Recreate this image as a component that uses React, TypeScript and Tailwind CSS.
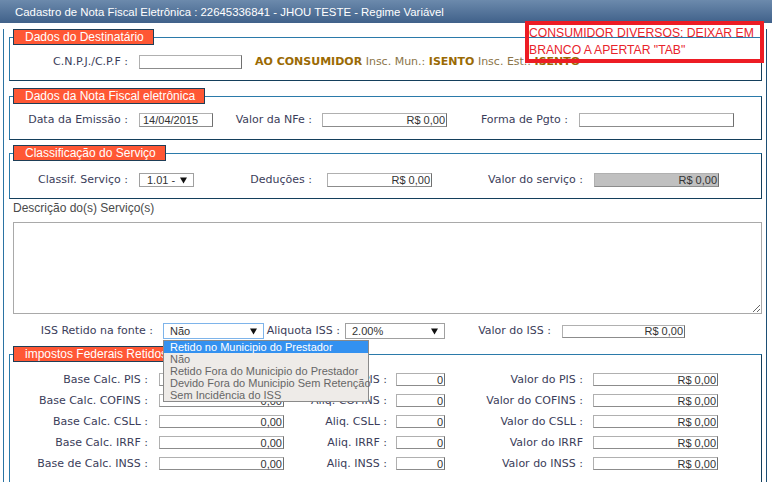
import React from 'react';

const lbl =
  "font-['DejaVu_Sans',sans-serif] text-[11px] leading-[14px] text-[#3b3d5a] whitespace-nowrap text-right";
const arial = "font-['Liberation_Sans',Arial,sans-serif]";

function Input({ className = '', value = '', left = false }: { className?: string; value?: string; left?: boolean }) {
  return (
    <div
      className={`flex items-center border border-[#b0b0b0] border-r-[#6f6f6f] border-b-[#8c8c8c] ${arial} text-[11px] leading-[12px] text-[#333] ${
        left ? 'justify-start pl-[3px]' : 'justify-end pr-[1px]'
      } ${className}`}
    >
      {value}
    </div>
  );
}

function Select({ className = '', value }: { className?: string; value: string }) {
  return (
    <div className={`flex items-center justify-between bg-white border ${arial} text-[11px] leading-[12px] text-[#333] ${className}`}>
      <span>{value}</span>
      <svg width="7" height="7" viewBox="0 0 7 7">
        <path d="M0 0.5h7L3.5 6.5z" fill="#111" />
      </svg>
    </div>
  );
}

function Box({ title, className = '', children }: { title: string; className?: string; children: React.ReactNode }) {
  return (
    <fieldset
      className={`ml-[5px] w-[753px] border border-[#2b7aaa] border-r-[#143f5c] border-b-[#143f5c] ${className}`}
    >
      <legend
        className={`ml-[3px] h-[16px] pl-[11px] pr-[9px] border border-[#1e3e57] bg-[#ff5734] text-white text-[12px] leading-[14px] whitespace-nowrap ${arial}`}
      >
        {title}
      </legend>
      {children}
    </fieldset>
  );
}

function TaxRow({ base, aliq, valor }: { base: string; aliq: string; valor: string }) {
  return (
    <div className="flex items-center h-[21px]">
      <span className={`${lbl} w-[138px]`}>{base}</span>
      <Input className="ml-[11px] w-[125px] h-[13px]" value="0,00" />
      <span className={`${lbl} w-[103px]`}>{aliq}</span>
      <Input className="ml-[9px] w-[49px] h-[13px]" value="0" />
      <span className={`${lbl} w-[138px]`}>{valor}</span>
      <Input className="ml-[10px] w-[125px] h-[13px]" value="R$ 0,00" />
    </div>
  );
}

export default function App() {
  return (
    <div className="relative w-[772px] h-[482px] overflow-hidden bg-white">
      {/* barra de título */}
      <div
        className={`h-[23px] pl-[15px] pt-[5px] bg-gradient-to-b from-[#6c8aac] to-[#40618a] text-white text-[11.4px] leading-[14px] ${arial}`}
      >
        Cadastro de Nota Fiscal Eletrônica : 22645336841 - JHOU TESTE - Regime Variável
      </div>

      <div className="ml-[3px] w-[764px] h-[459px] border-x border-[#2b73a3] border-r-[#1d4f75]">
        <Box title="Dados do Destinatário" className="mt-[6px] pt-[10px] pb-[11px]">
          <div className="flex items-center">
            <span className={`${lbl} w-[118px]`}>C.N.P.J./C.P.F :</span>
            <Input className="ml-[11px] w-[103px] h-[14px]" />
            <span className="ml-[13px] font-['DejaVu_Sans',sans-serif] text-[11px] leading-[14px] whitespace-nowrap text-[#8b7448]">
              <b className="text-[#9a6a04]">AO CONSUMIDOR</b> Insc. Mun.: <b className="text-[#9a6a04]">ISENTO</b> Insc.
              Est.: <b className="text-[#9a6a04]">ISENTO</b>
            </span>
          </div>
        </Box>

        <Box title="Dados da Nota Fiscal eletrônica" className="mt-[7px] pt-[9px] pb-[12px]">
          <div className="flex items-center">
            <span className={`${lbl} w-[118px]`}>Data da Emissão :</span>
            <Input className="ml-[11px] w-[74px] h-[14px]" value="14/04/2015" left />
            <span className={`${lbl} w-[99px]`}>Valor da NFe :</span>
            <Input className="ml-[10px] w-[125px] h-[14px]" value="R$ 0,00" />
            <span className={`${lbl} w-[121px]`}>Forma de Pgto :</span>
            <Input className="ml-[11px] w-[155px] h-[14px]" />
          </div>
        </Box>

        <Box title="Classificação do Serviço" className="mt-[5px] pt-[12px] pb-[11px]">
          <div className="flex items-center">
            <span className={`${lbl} w-[118px]`}>Classif. Serviço :</span>
            <Select className="ml-[11px] w-[55px] h-[14px] pl-[7px] pr-[6px] border-[#a0a0a0]" value="1.01 -" />
            <span className={`${lbl} w-[118px]`}>Deduções :</span>
            <Input className="ml-[15px] w-[105px] h-[14px]" value="R$ 0,00" />
            <span className={`${lbl} w-[151px]`}>Valor do serviço :</span>
            <Input className="ml-[11px] w-[125px] h-[14px] bg-[#c0c0c0]" value="R$ 0,00" />
          </div>
        </Box>

        <div className={`ml-[9px] mt-[2px] text-[12px] leading-[14px] text-[#4a4a4a] ${arial}`}>
          Descrição do(s) Serviço(s)
        </div>
        <textarea
          readOnly
          className="block ml-[9px] mt-[7px] w-[749px] h-[92px] border border-[#a9a9a9] bg-white"
        />

        <div className="mt-[9px] flex items-center h-[16px]">
          <span className={`${lbl} w-[149px]`}>ISS Retido na fonte :</span>
          <div className="relative ml-[10px]">
            <Select className="w-[101px] h-[16px] pl-[6px] pr-[6px] border-[#7eb4ea]" value="Não" />
            <div
              className={`absolute z-10 left-0 top-[17px] w-[206px] h-[62px] border border-[#8a8a8a] bg-[#eeebe8] ${arial} text-[11px] leading-[12px] text-[#666] whitespace-nowrap`}
            >
              <div className="h-[12px] pl-[6px] bg-[#3391f0] text-white">Retido no Municipio do Prestador</div>
              <div className="h-[12px] pl-[6px]">Não</div>
              <div className="h-[12px] pl-[6px]">Retido Fora do Municipio do Prestador</div>
              <div className="h-[12px] pl-[6px]">Devido Fora do Municipio Sem Retenção</div>
              <div className="h-[12px] pl-[6px]">Sem Incidência do ISS</div>
            </div>
          </div>
          <span className={`${lbl} w-[76px]`}>Aliquota ISS :</span>
          <Select className="ml-[5px] w-[100px] h-[16px] pl-[6px] pr-[6px] border-[#a0a0a0]" value="2.00%" />
          <span className={`${lbl} w-[106px]`}>Valor do ISS :</span>
          <Input className="ml-[11px] w-[123px] h-[13px]" value="R$ 0,00" />
        </div>

        <Box title="impostos Federais Retidos" className="mt-[7px] pt-[7px] pb-[10px]">
          <TaxRow base="Base Calc. PIS :" aliq="Aliq. PIS :" valor="Valor do PIS :" />
          <TaxRow base="Base Calc. COFINS :" aliq="Aliq. COFINS :" valor="Valor do COFINS :" />
          <TaxRow base="Base Calc. CSLL :" aliq="Aliq. CSLL :" valor="Valor do CSLL :" />
          <TaxRow base="Base Calc. IRRF :" aliq="Aliq. IRRF :" valor="Valor do IRRF" />
          <TaxRow base="Base de Calc. INSS :" aliq="Aliq. INSS :" valor="Valor do INSS :" />
        </Box>
      </div>

      {/* anotação em vermelho */}
      <div
        className={`absolute left-[525px] top-[21px] w-[239px] h-[42px] border-4 border-[#ed1c24] text-[#e8232b] text-[12.2px] leading-[17px] whitespace-nowrap ${arial}`}
      >
        CONSUMIDOR DIVERSOS: DEIXAR EM
        <br />
        BRANCO A APERTAR "TAB"
      </div>
    </div>
  );
}
